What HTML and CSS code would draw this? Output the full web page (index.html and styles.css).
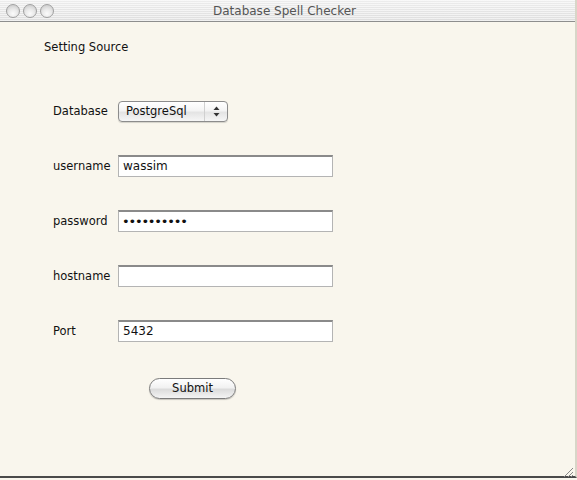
FILE: index.html
```html
<!DOCTYPE html>
<html>
<head>
<meta charset="utf-8">
<link rel="stylesheet" href="styles.css">
</head>
<body>
<div class="window">
  <div class="titlebar">
    <div class="lights">
      <span class="light"></span><span class="light"></span><span class="light"></span>
    </div>
    <div class="title">Database Spell Checker</div>
  </div>
  <div class="content">
    <div class="heading">Setting Source</div>
    <div class="form">
      <div class="row">
        <span class="label">Database</span>
        <div class="popup">
          <span class="popup-text">PostgreSql</span>
          <span class="popup-arrows">
            <svg width="7" height="11" viewBox="0 0 7 11"><path d="M3.5 0.5 L6.5 4 L0.5 4 Z" fill="#333"/><path d="M3.5 10.5 L6.5 7 L0.5 7 Z" fill="#333"/></svg>
          </span>
        </div>
      </div>
      <div class="row">
        <span class="label">username</span>
        <div class="field">wassim</div>
      </div>
      <div class="row">
        <span class="label">password</span>
        <div class="field dots">&#8226;&#8226;&#8226;&#8226;&#8226;&#8226;&#8226;&#8226;&#8226;&#8226;</div>
      </div>
      <div class="row">
        <span class="label">hostname</span>
        <div class="field"></div>
      </div>
      <div class="row">
        <span class="label">Port</span>
        <div class="field">5432</div>
      </div>
    </div>
    <div class="actions">
      <div class="button">Submit</div>
    </div>
    <div class="grip">
      <svg width="12" height="12" viewBox="0 0 12 12"><path d="M11 2 L2 11 M11 6 L6 11 M11 9 L9 11" stroke="#888" stroke-width="1"/></svg>
    </div>
  </div>
</div>
</body>
</html>
```
FILE: styles.css
```css
html, body {
  margin: 0;
  padding: 0;
}
body {
  width: 577px;
  height: 480px;
  overflow: hidden;
  background: #f9f6ed;
  font-family: "DejaVu Sans", "Liberation Sans", sans-serif;
  color: #111;
}
.window {
  height: 478px;
  border-bottom: 2px solid #4a4a4a;
  border-right: 2px solid #d8d6c8;
  box-sizing: border-box;
  display: flex;
  flex-direction: column;
  background: #f9f6ed;
}
.titlebar {
  height: 22px;
  box-sizing: border-box;
  border-bottom: 1px solid #8e8e8e;
  background:
    repeating-linear-gradient(to bottom, rgba(255,255,255,0.5) 0 1px, rgba(0,0,0,0.02) 1px 2px),
    linear-gradient(to bottom, #f2f2f2, #e2e2e2);
  display: flex;
  align-items: center;
  position: relative;
}
.lights {
  display: flex;
  gap: 3px;
  padding-left: 6px;
}
.light {
  width: 14px;
  height: 14px;
  border-radius: 50%;
  box-sizing: border-box;
  border: 1px solid #a0a0a0;
  background: radial-gradient(circle at 50% 72%, #fbfbfb 0, #e8e8e8 45%, #c2c2c2 100%);
}
.title {
  flex: 1;
  text-align: center;
  font-size: 12px;
  color: #555;
  margin-right: 60px;
}
.content {
  flex: 1;
  position: relative;
  padding-left: 44px;
}
.heading {
  margin-top: 18px;
  font-size: 11.5px;
  line-height: 14px;
}
.form {
  margin-top: 46px;
  padding-left: 9px;
  display: flex;
  flex-direction: column;
  gap: 33px;
}
.row {
  display: flex;
  align-items: center;
  height: 22px;
}
.label {
  width: 65px;
  font-size: 11.5px;
  flex: none;
}
.field {
  width: 215px;
  height: 22px;
  box-sizing: border-box;
  background: #fff;
  border: 1px solid #b4b4b4;
  border-top: 2px solid #8a8a8a;
  font-size: 12px;
  line-height: 19px;
  padding-left: 4px;
  color: #111;
}
.dots {
  font-size: 13px;
  letter-spacing: -1.2px;
  padding-left: 3px;
}
.popup {
  width: 110px;
  height: 21px;
  box-sizing: border-box;
  border: 1px solid #8c8c8c;
  border-radius: 4px;
  background: linear-gradient(to bottom, #ffffff 0%, #f4f4f4 45%, #e4e4e4 55%, #f6f6f6 100%);
  display: flex;
  align-items: center;
  box-shadow: 0 1px 1px rgba(0,0,0,0.15);
}
.popup-text {
  flex: 1;
  font-size: 11.5px;
  padding-left: 7px;
}
.popup-arrows {
  width: 22px;
  height: 19px;
  display: flex;
  align-items: center;
  justify-content: center;
  border-left: 1px solid #d0d0d0;
}
.actions {
  margin-top: 36px;
  padding-left: 105px;
}
.button {
  width: 87px;
  height: 21px;
  box-sizing: border-box;
  border: 1px solid #7b7b7b;
  border-radius: 11px;
  background: linear-gradient(to bottom, #ffffff 0%, #f2f2f2 45%, #dcdcdc 55%, #f4f4f4 100%);
  text-align: center;
  font-size: 11.5px;
  line-height: 19px;
  box-shadow: 0 1px 1px rgba(0,0,0,0.2);
}
.grip {
  position: absolute;
  right: 1px;
  bottom: 1px;
  width: 12px;
  height: 12px;
}
```
